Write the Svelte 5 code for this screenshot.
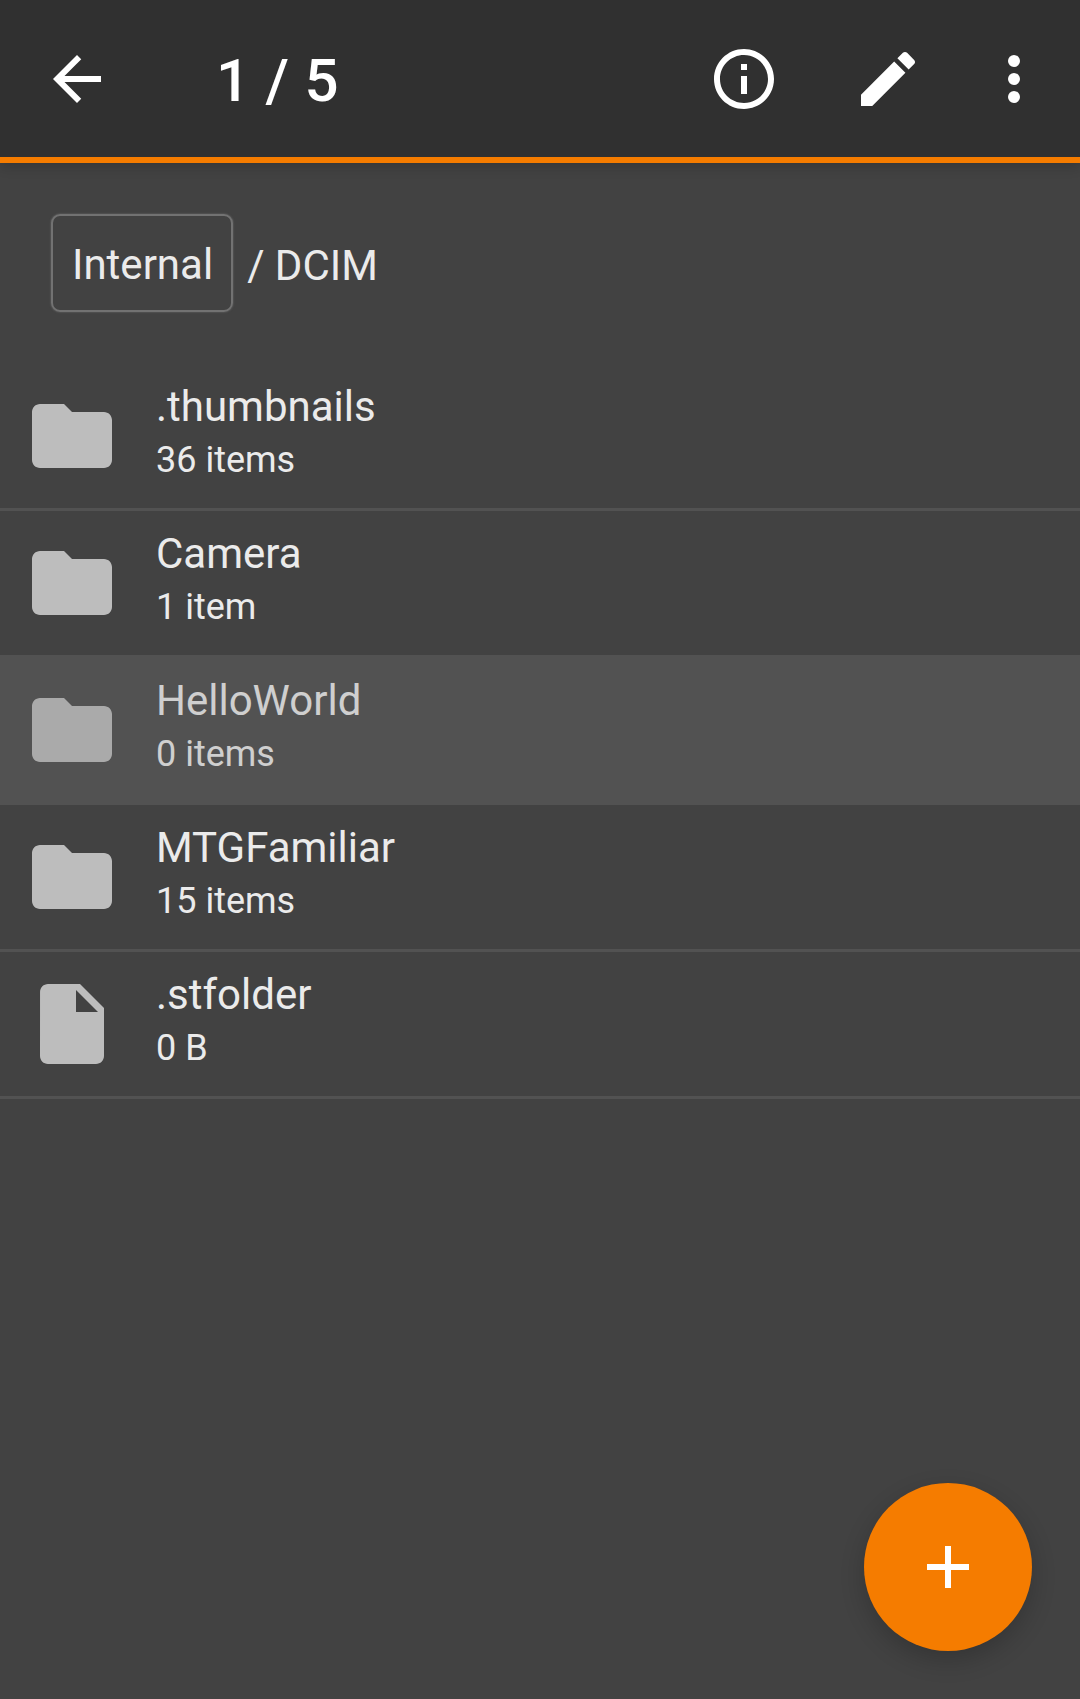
<script>
  const files = [
    { name: '.thumbnails', info: '36 items', type: 'folder' },
    { name: 'Camera', info: '1 item', type: 'folder' },
    { name: 'HelloWorld', info: '0 items', type: 'folder', selected: true },
    { name: 'MTGFamiliar', info: '15 items', type: 'folder' },
    { name: '.stfolder', info: '0 B', type: 'file' }
  ];
</script>

<div class="screen">
  <header class="toolbar">
    <svg class="back" viewBox="0 0 24 24"><path d="M20 11H7.83l5.59-5.59L12 4l-8 8 8 8 1.41-1.41L7.83 13H20v-2z" /></svg>
    <h1>1 / 5</h1>
    <div class="actions">
      <svg viewBox="0 0 24 24"><path d="M11 17h2v-6h-2v6zm1-15C6.48 2 2 6.48 2 12s4.48 10 10 10 10-4.48 10-10S17.52 2 12 2zm0 18c-4.41 0-8-3.59-8-8s3.59-8 8-8 8 3.59 8 8-3.59 8-8 8zM11 9h2V7h-2v2z" /></svg>
      <svg viewBox="0 0 24 24"><path d="M3 17.25V21h3.75L17.81 9.94l-3.75-3.75L3 17.25zM20.71 7.04c.39-.39.39-1.02 0-1.41l-2.34-2.34c-.39-.39-1.02-.39-1.41 0l-1.83 1.83 3.75 3.75 1.83-1.83z" /></svg>
      <svg class="more" viewBox="0 0 24 24"><circle cx="12" cy="6" r="2" /><circle cx="12" cy="12" r="2" /><circle cx="12" cy="18" r="2" /></svg>
    </div>
  </header>

  <nav class="crumbs">
    <span class="root">Internal</span>
    <span class="path">/ DCIM</span>
  </nav>

  <ul class="list">
    {#each files as file}
      <li class="row" class:selected={file.selected}>
        <svg class="icon" viewBox="0 0 24 24">
          {#if file.type === 'folder'}
            <path d="M10 4H4c-1.1 0-2 .9-2 2v12c0 1.1.9 2 2 2h16c1.1 0 2-.9 2-2V8c0-1.1-.9-2-2-2h-8l-2-2z" />
          {:else}
            <path d="M6 2c-1.1 0-1.99.9-1.99 2L4 20c0 1.1.89 2 1.99 2H18c1.1 0 2-.9 2-2V8l-6-6H6zm7 7V3.5L18.5 9H13z" />
          {/if}
        </svg>
        <div class="text">
          <div class="name">{file.name}</div>
          <div class="info">{file.info}</div>
        </div>
      </li>
    {/each}
  </ul>

  <button class="fab" aria-label="Add">
    <svg viewBox="0 0 24 24"><path d="M19 13h-6v6h-2v-6H5v-2h6V5h2v6h6v2z" /></svg>
  </button>
</div>

<style>
  :global(body) {
    margin: 0;
    background: #424242;
  }

  .screen {
    position: relative;
    height: 1699px;
    overflow: hidden;
    background: #424242;
    font-family: Roboto, sans-serif;
    color: #ebebeb;
  }

  .toolbar {
    display: flex;
    align-items: center;
    box-sizing: border-box;
    height: 163px;
    padding: 1px 30px 0 41px;
    background: #303030;
    border-bottom: 6px solid #f57c00;
    box-shadow: 0 3px 12px rgba(0, 0, 0, 0.2);
    position: relative;
  }

  .toolbar svg {
    width: 72px;
    height: 72px;
    fill: #ffffff;
    flex: none;
  }

  h1 {
    margin: 4px 0 0 103px;
    font-size: 60px;
    font-weight: 500;
    line-height: 72px;
    letter-spacing: 0.3px;
    color: #ffffff;
  }

  .actions {
    display: flex;
    gap: 72px;
    margin-left: auto;
  }

  .actions .more {
    margin-left: -18px;
  }

  .crumbs {
    display: flex;
    align-items: center;
    gap: 14px;
    padding: 51px 0 52px 51px;
    font-size: 42px;
  }

  .root {
    display: block;
    box-sizing: border-box;
    height: 98px;
    padding: 4px 18px 0 19px;
    line-height: 90px;
    border: 2px solid #727272;
    border-radius: 9px;
    box-shadow: 0 0 2px #727272;
  }

  .path {
    padding-top: 4px;
  }

  .list {
    margin: 0;
    padding: 0;
    list-style: none;
  }

  .row {
    display: flex;
    align-items: center;
    box-sizing: border-box;
    height: 147px;
    padding: 0 0 0 24px;
    border-bottom: 3px solid #525252;
  }

  .row.selected {
    background: #525252;
    margin-top: -3px;
    height: 150px;
    padding-top: 3px;
  }

  .row.selected .text {
    opacity: 0.82;
  }

  .row.selected .icon {
    fill: #aaaaaa;
  }

  .icon {
    width: 96px;
    height: 96px;
    fill: #bdbdbd;
    flex: none;
  }

  .text {
    margin: 0 0 8px 36px;
  }

  .name {
    font-size: 42px;
    line-height: 56px;
  }

  .info {
    font-size: 36px;
    line-height: 50px;
  }

  .fab {
    position: absolute;
    right: 48px;
    bottom: 48px;
    width: 168px;
    height: 168px;
    padding: 0;
    border: 0;
    border-radius: 50%;
    background: #f57c00;
    box-shadow: 0 9px 24px rgba(0, 0, 0, 0.2);
    display: flex;
    align-items: center;
    justify-content: center;
  }

  .fab svg {
    width: 72px;
    height: 72px;
    fill: #ffffff;
  }
</style>
